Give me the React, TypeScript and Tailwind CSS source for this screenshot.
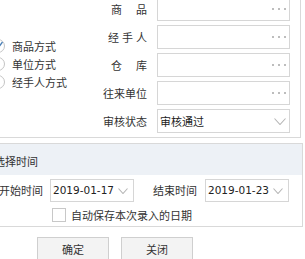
import React from 'react';

const CJK = "font-['Noto_Sans_CJK_SC','Noto_Sans',sans-serif]";

const Chevron: React.FC<{ w: number; h: number }> = ({ w, h }) => (
  <svg width={w} height={h} viewBox={`0 0 ${w} ${h}`} className="shrink-0">
    <polyline points={`0.5,0.5 ${w / 2},${h - 0.5} ${w - 0.5},0.5`} fill="none" stroke="#b5b5b5" strokeWidth="1.1" />
  </svg>
);

const Dots = () => (
  <div className="flex items-center gap-[4px] pr-[3px]">
    <span className="w-[2px] h-[2px] bg-[#bdbdbd]" />
    <span className="w-[2px] h-[2px] bg-[#bdbdbd]" />
    <span className="w-[2px] h-[2px] bg-[#bdbdbd]" />
  </div>
);

const Radio: React.FC<{ label: string; checked?: boolean }> = ({ label, checked }) => (
  <div className="h-[18px] flex items-center gap-[7px]">
    <div className="w-[14px] h-[14px] rounded-full border border-[#c4c4c4] bg-white flex items-center justify-center">
      {checked && (
        <svg width="12" height="10" viewBox="0 0 12 10">
          <polyline points="2,5 5,8.5 10.5,1" fill="none" stroke="#4a7fb5" strokeWidth="1.3" />
        </svg>
      )}
    </div>
    <span>{label}</span>
  </div>
);

const Label: React.FC<{ chars: string[]; width: number }> = ({ chars, width }) => (
  <div className="flex justify-end pr-[1px]">
    <div className="flex justify-between" style={{ width }}>
      {chars.map((c, i) => (
        <span key={i}>{c}</span>
      ))}
    </div>
  </div>
);

const PickInput = () => (
  <div className="h-[24px] border border-[#d6d6d6] bg-white flex items-center justify-end">
    <Dots />
  </div>
);

const rows: { chars: string[]; width: number }[] = [
  { chars: ['商', '品'], width: 36 },
  { chars: ['经', '手', '人'], width: 39 },
  { chars: ['仓', '库'], width: 36 },
  { chars: ['往', '来', '单', '位'], width: 44 },
];

const DateBox: React.FC<{ value: string }> = ({ value }) => (
  <div className="w-[84px] h-[23px] border border-[#d6d6d6] bg-white flex items-center justify-between pl-[2px] pr-[5px]">
    <span className="font-['DejaVu_Sans',sans-serif] text-[10.5px] text-[#222]">{value}</span>
    <Chevron w={10} h={6} />
  </div>
);

export default function App() {
  return (
    <div className={`w-[305px] h-[259px] overflow-hidden bg-white text-[#333] text-[11px] leading-none ${CJK}`}>
      <div className="-ml-[20px] -mt-[3px]">
        {/* top filter panel */}
        <div className="w-[321px] h-[141px] border-r border-b border-[#d9d9d9] flex">
          <div className="w-[123px] flex-none pl-[11px] pt-[40px]">
            <Radio label="商品方式" checked />
            <Radio label="单位方式" />
            <Radio label="经手人方式" />
          </div>
          <div className="grid grid-cols-[45px_133px] gap-x-[9px] gap-y-[4px] auto-rows-[24px] items-center">
            {rows.map((r) => (
              <React.Fragment key={r.chars.join('')}>
                <Label chars={r.chars} width={r.width} />
                <PickInput />
              </React.Fragment>
            ))}
            <Label chars={['审', '核', '状', '态']} width={44} />
            <div className="h-[24px] border border-[#d6d6d6] bg-white flex items-center justify-between pl-[2px] pr-[3px]">
              <span className="text-[#222]">审核通过</span>
              <Chevron w={12} h={7} />
            </div>
          </div>
        </div>

        {/* time section */}
        <div className="mt-[5px] w-[323px] border-t border-r border-b border-[#d9d9d9]">
          <div className="h-[31px] bg-[#edf1f6] flex items-center pl-[14px] pt-[4px]">选择时间</div>
          <div className="mt-[4px] h-[23px] flex items-center pl-[19px]">
            <span className="w-[44px]">开始时间</span>
            <div className="ml-[7px]">
              <DateBox value="2019-01-17" />
            </div>
            <span className="ml-[19px] w-[44px]">结束时间</span>
            <div className="ml-[8px]">
              <DateBox value="2019-01-23" />
            </div>
          </div>
          <div className="mt-[6px] mb-[4px] h-[14px] flex items-center pl-[72px] gap-[5px]">
            <div className="w-[14px] h-[14px] border border-[#c8c8c8] bg-white" />
            <span>自动保存本次录入的日期</span>
          </div>
        </div>

        {/* buttons */}
        <div className="mt-[10px] pl-[57px] flex gap-[12px]">
          <button className="w-[72px] h-[24px] border border-[#cfcfcf] bg-[#f3f3f3] text-[#333] text-[11px]">确定</button>
          <button className="w-[72px] h-[24px] border border-[#cfcfcf] bg-[#f3f3f3] text-[#333] text-[11px]">关闭</button>
        </div>
      </div>
    </div>
  );
}
